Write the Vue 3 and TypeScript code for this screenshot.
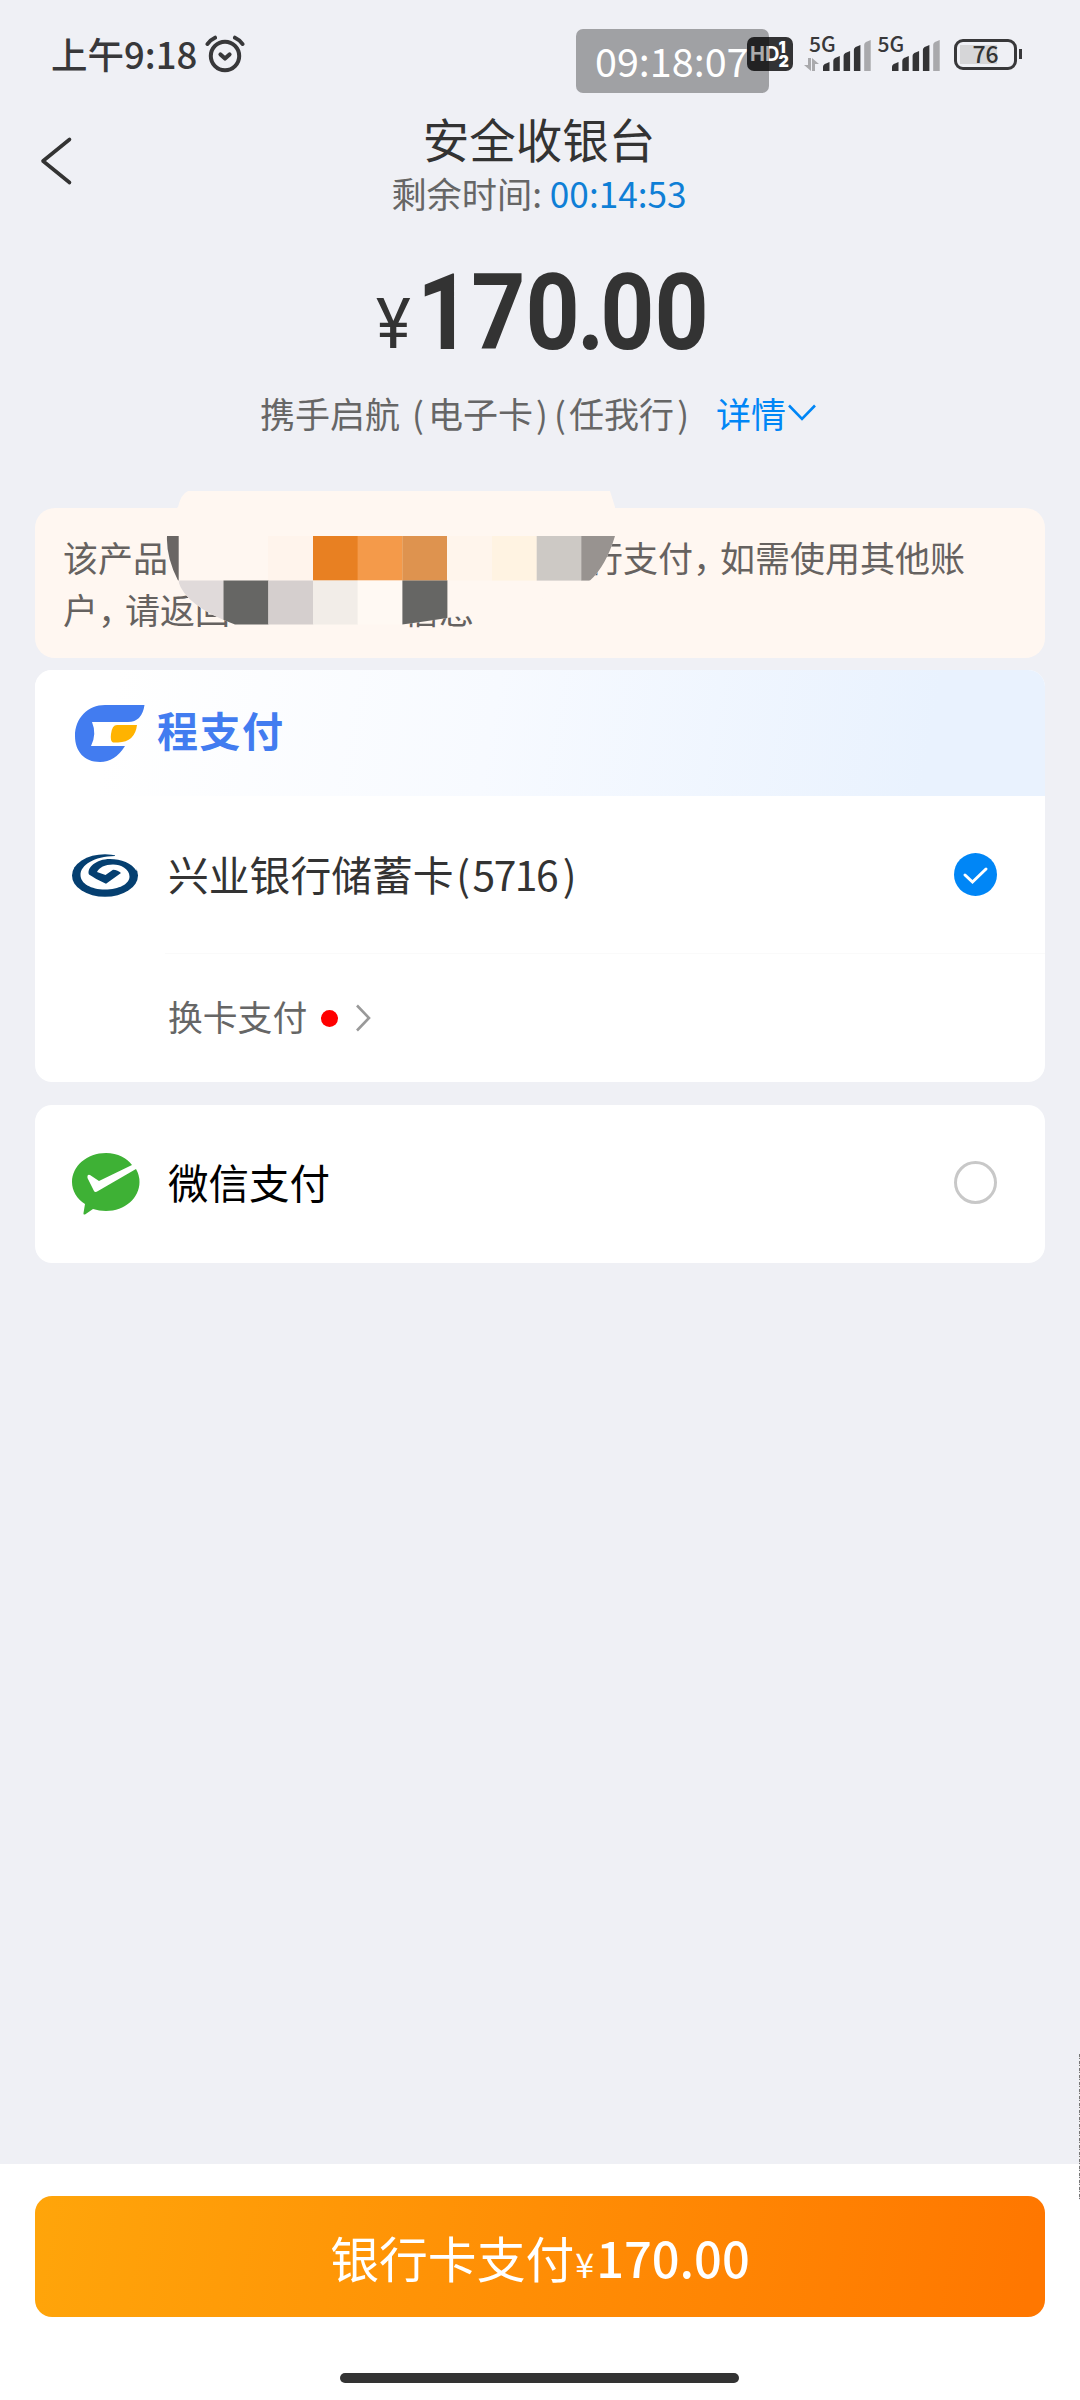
<script setup lang="ts">
interface Tile {
  x: number
  y: number
  fill: string
}

const clock = '09:18:07'
const hiddenTiles: Tile[] = [
  { x: 233, y: 45, fill: '#fff4ec' },
  { x: 278, y: 45, fill: '#e88022' },
  { x: 322.6, y: 45, fill: '#f49a4a' },
  { x: 367.4, y: 45, fill: '#de934f' },
  { x: 412, y: 45, fill: '#fff5ec' },
  { x: 457, y: 45, fill: '#fff3e2' },
  { x: 501.7, y: 45, fill: '#cdc9c5' },
  { x: 546.3, y: 45, fill: '#989390' },
  { x: 143.7, y: 89.5, fill: '#e0dada' },
  { x: 188.5, y: 89.5, fill: '#666664' },
  { x: 233.3, y: 89.5, fill: '#d5cfce' },
  { x: 278, y: 89.5, fill: '#f2ede8' },
  { x: 322.6, y: 89.5, fill: '#fff9f3' },
  { x: 367.4, y: 89.5, fill: '#666664' },
]
const barTops = [22, 16, 11, 5, 0]
</script>

<template>
  <div class="screen">
    <header class="status">
      <div class="status-left">
        <span class="time">上午9:18</span>
        <svg class="alarm" width="40" height="38" viewBox="0 0 40 38" fill="none" stroke="#38383a" stroke-linecap="round">
          <circle cx="20" cy="21" r="14.2" stroke-width="4" />
          <path d="M2.5 9 Q5 5 10 2.7M37.5 9 Q35 5 30 2.7" stroke-width="4" />
          <path d="M15.5 19.5 L20 23.5 L24.5 19.5" stroke-width="4.2" stroke-linejoin="round" />
        </svg>
      </div>
      <div class="status-right">
        <div class="hd">
          <span>HD</span>
          <span class="sims"><b>1</b><b>2</b></span>
        </div>
        <div v-for="n in 2" :key="n" class="signal">
          <span class="net">5G</span>
          <svg width="70" height="34" viewBox="0 0 70 34">
            <g v-if="n === 1" fill="#a9a9ac">
              <path d="M5 20h3v13L1 27h4zM12 33h-3V20l7 6h-4z" />
            </g>
            <path
              v-for="(t, i) in barTops"
              :key="i"
              :d="`M${20 + i * 10.3} 33 V${t + 7} Q${20 + i * 10.3} ${t + 4.5} ${23 + i * 10.3} ${t + 3.5} L${26.5 + i * 10.3} ${t + 2} V33 Z`"
              :fill="i === 4 ? '#a9a9ac' : '#333335'"
            />
          </svg>
        </div>
        <div class="battery"><span>76</span></div>
        <i class="nub"></i>
      </div>
      <div class="clock">{{ clock }}</div>
    </header>

    <nav class="nav">
      <svg class="back" width="34" height="50" viewBox="0 0 34 50" fill="none" stroke="#333" stroke-width="3.6" stroke-linecap="round" stroke-linejoin="round">
        <path d="M30.500 3.5 L4 25 L30.500 46.5" />
      </svg>
      <div class="titles">
        <h1>安全收银台</h1>
        <p>剩余时间: <span>00:14:53</span></p>
      </div>
    </nav>

    <section class="amount">
      <span class="yen">¥</span>
      <span class="num">170<i>.</i>00</span>
    </section>

    <section class="order">
      <span>携手启航</span><span class="paren first">(</span><span>电子卡</span><span class="paren">)</span><span class="paren">(</span><span>任我行</span><span class="paren">)</span>
      <a>详情</a>
      <svg width="28" height="18" viewBox="0 0 28 18" fill="none" stroke="#0086f6" stroke-width="2.6"><path d="M1 1.5 L14 15 L27 1.5" /></svg>
    </section>

    <section class="notice">
      <p>该产品<span class="gap"></span>行支付<span class="comma">，</span>如需使用其他账</p>
      <p>户<span class="comma">，</span>请返回<span class="gap short"></span>信息</p>
      <svg class="mosaic" width="1010" height="167" viewBox="0 0 1010 167">
        <defs>
          <clipPath id="smear">
            <path d="M143 16 Q146 3 153 0 H575 L580 16 V45 Q571 75 555 89.5 Q500 116 412 127 Q385 131 367 133.5 H200 Q150 115 143 89.5 Q131 66 132 45 V25 Z" />
          </clipPath>
        </defs>
        <g clip-path="url(#smear)">
          <rect x="120" y="0" width="480" height="140" fill="#fff7f1" />
          <rect x="131" y="45" width="12.7" height="44.5" fill="#6a6664" />
          <rect v-for="(t, i) in hiddenTiles" :key="i" :x="t.x" :y="t.y" width="45" height="44.6" :fill="t.fill" />
        </g>
      </svg>
    </section>

    <section class="card">
      <div class="brand">
        <svg width="70" height="57" viewBox="0 0 70 57">
          <path d="M30 0 H69.5 Q67 17 53 17 H17 Q22 29 16 41 H50 Q40 57 25 57 C9 57 0 46 0 31 C0 13 13 0 30 0Z" fill="#427cf0" />
          <path d="M42 20 H62 Q60 37 43 37.5 H38 Q35 36 36 29 Q37 20 42 20Z" fill="#ffb300" />
        </svg>
        <strong>程支付</strong>
      </div>
      <div class="method">
        <svg class="logo" width="67" height="44" viewBox="0 0 67 44">
          <ellipse cx="33" cy="21.5" rx="33" ry="21.3" fill="#053f70" />
          <path
            d="M43 2 C22 2.500 8.500 11 8.500 21 C8.500 29.500 19 35.500 33 35.500 C47 35.500 57.500 30 57.500 22.500 C57.500 15 49 10.500 41 10.500 C33 10.500 27 13.500 25 18 L33.500 21 L41 15.800 Q46 16 49 19 L34 29.800 Q24 25.500 17 20.500 C14.500 14 24 5 38 5 C49 5 60 9 64.500 17 L67 0 H43 Z"
            fill="#fff"
          />
        </svg>
        <span class="name">兴业银行储蓄卡<span class="open">(</span><span class="digits">5716</span><span class="close">)</span></span>
        <svg class="check" width="43" height="43" viewBox="0 0 43 43">
          <circle cx="21.5" cy="21.5" r="21.5" fill="#0086f6" />
          <path d="M11 22 L18.5 29 L32 16" fill="none" stroke="#fff" stroke-width="3" stroke-linecap="round" />
        </svg>
      </div>
      <div class="switch">
        <span>换卡支付</span>
        <i class="dot"></i>
        <svg width="15" height="28" viewBox="0 0 15 28" fill="none" stroke="#999" stroke-width="2.6"><path d="M1 1.5 L13 14 L1 26.5" /></svg>
      </div>
    </section>

    <section class="card wechat">
      <svg class="logo" width="68" height="62" viewBox="0 0 68 62">
        <path d="M34 0 C46 0 55 5 60 12 L27 28 L18 22 Q15 21 15.5 25 L22 38 Q23 40 26 38 L64 16 Q67.5 22 67.5 29 C67.5 45 53 58 34 58 Q27 58 21 56 L13 61.5 Q11 62 11.5 60 L13 51 C5 46 0 38 0 29 C0 13 15 0 34 0Z" fill="#3eb135" />
      </svg>
      <span class="name">微信支付</span>
      <i class="radio"></i>
    </section>

    <footer class="footer">
      <button type="button">银行卡支付<small>¥</small><span>170.00</span></button>
      <div class="home"></div>
    </footer>
    <i class="edge"></i>
  </div>
</template>

<style>
body {
  margin: 0;
}
</style>

<style scoped>
.screen {
  position: relative;
  display: flex;
  flex-direction: column;
  width: 1080px;
  height: 2400px;
  overflow: hidden;
  background: #eff0f5;
  color: #333;
  font-family: "Noto Sans CJK SC", sans-serif;
}
.screen * {
  box-sizing: border-box;
}
.status {
  position: relative;
  display: flex;
  justify-content: space-between;
  height: 108px;
  padding: 35px 58px 0 51px;
}
.status-left {
  display: flex;
  height: 40px;
  color: #38383a;
}
.time {
  width: 154px;
  font-size: 36.5px;
  font-weight: 500;
  line-height: 37px;
  white-space: nowrap;
}
.status-right {
  display: flex;
  align-items: flex-start;
}
.hd {
  display: flex;
  width: 46px;
  height: 34px;
  margin: 2px 10px 0 0;
  padding-left: 3px;
  border-radius: 7px;
  background: #333335;
  color: #fff;
  font: 700 20px/34px "Inter", sans-serif;
}
.sims {
  display: flex;
  flex-direction: column;
  margin-left: -1px;
  padding-top: 3px;
  font-size: 16px;
  line-height: 14px;
}
.signal {
  position: relative;
  width: 68.5px;
  height: 36px;
}
.net {
  position: absolute;
  top: -2px;
  left: 6px;
  font-size: 21px;
  font-weight: 500;
  line-height: 20px;
  color: #38383a;
}
.signal svg {
  display: block;
  margin-top: 3px;
}
.battery {
  width: 63px;
  height: 31px;
  margin: 4px 2px 0 14px;
  border: 3.5px solid #38383a;
  border-radius: 9px;
  background: linear-gradient(#d6d6d8, #d6d6d8) 3px 3px / 37px 19px no-repeat;
  font-size: 23px;
  font-weight: 500;
  line-height: 22px;
  text-align: center;
}
.nub {
  width: 3px;
  height: 10px;
  margin-top: 14px;
  background: #38383a;
}
.clock {
  position: absolute;
  top: 29px;
  left: 576px;
  width: 193px;
  height: 64px;
  padding-left: 19px;
  border-radius: 7px;
  background: rgba(0, 0, 0, 0.33);
  color: #fff;
  font-size: 39.5px;
  line-height: 61px;
}
.nav {
  display: flex;
  height: 112px;
}
.back {
  width: 34px;
  margin: 28px 0 0 39px;
}
.titles {
  width: 934px;
  margin-top: -2px;
  text-align: center;
}
h1 {
  margin: 0 2px 0 0;
  font-size: 46.5px;
  font-weight: 400;
  line-height: 64px;
}
p {
  margin: 0;
}
.titles p {
  margin-right: 2px;
  color: #666;
  font-size: 35.2px;
  line-height: 46px;
}
.titles p span {
  color: #0f7fd6;
}
.amount {
  display: flex;
  height: 162px;
  padding: 56px 0 0 376px;
  font-family: Roboto, sans-serif;
  font-weight: 700;
}
.yen {
  width: 41px;
  padding-top: 23px;
  font-size: 71px;
  font-weight: 400;
  line-height: 50px;
  transform: scaleX(0.93);
  transform-origin: left;
}
.num {
  font-size: 105px;
  line-height: 75px;
  transform: scaleX(0.9);
  transform-origin: left;
  white-space: nowrap;
}
.num i {
  display: inline-block;
  width: 23px;
  font-style: normal;
  text-indent: -3px;
}
.order {
  display: flex;
  align-items: center;
  height: 126px;
  padding: 0 0 64px 260px;
  color: #666;
  font-size: 35px;
  line-height: 62px;
}
.paren {
  width: 18px;
  text-align: center;
}
.paren.first {
  width: 28px;
  padding-left: 8px;
}
.order a {
  margin: 0 2px 0 24px;
  color: #0086f6;
}
.notice {
  position: relative;
  height: 150px;
  margin: 0 35px;
  padding: 23px 0 0 28px;
  border-radius: 20px;
  background: #fff7f1;
  color: #666260;
  font-size: 35px;
  line-height: 52px;
  white-space: nowrap;
}
.gap {
  display: inline-block;
  width: 420px;
}
.gap.short {
  width: 174px;
}
.comma {
  margin-right: -8px;
}
.mosaic {
  position: absolute;
  top: -17px;
  left: 0;
}
.card {
  margin: 12px 35px 0;
  overflow: hidden;
  border-radius: 17px;
  background: #fff;
}
.brand {
  display: flex;
  height: 126px;
  padding: 35px 0 0 40px;
  background: linear-gradient(100deg, #fff 8%, #f7faff 45%, #e9f2fe 88%);
}
.brand strong {
  margin: -4px 0 0 12px;
  color: #427cf0;
  font-size: 41px;
  font-weight: 700;
  line-height: 56px;
  letter-spacing: 1.5px;
}
.method {
  display: flex;
  height: 157px;
  padding: 0 48px 0 37px;
}
.method .logo {
  margin-top: 58px;
}
.name {
  flex: 1;
  padding-left: 29px;
  font-size: 40.8px;
  line-height: 60px;
}
.method .name {
  margin-top: 48px;
}
.open,
.close {
  display: inline-block;
  width: 17px;
  text-align: center;
}
.open {
  width: 19px;
}
.close {
  width: 25px;
}
.digits {
  letter-spacing: -1.5px;
}
.check {
  margin-top: 57px;
}
.switch {
  display: flex;
  align-items: center;
  height: 129px;
  margin-left: 130px;
  border-top: 1px solid #fafafa;
  padding: 0 0 1px 3px;
  color: #666;
  font-size: 35px;
}
.switch span {
  width: 139px;
  margin-top: -3px;
  font-size: 34.8px;
  white-space: nowrap;
}
.dot {
  width: 17px;
  height: 17px;
  margin: 2px 18px 0 14px;
  border-radius: 50%;
  background: #f00;
}
.wechat {
  display: flex;
  height: 158px;
  margin-top: 23px;
  padding: 0 48px 0 37px;
}
.wechat .logo {
  margin-top: 48px;
}
.wechat .name {
  padding-left: 28px;
  margin-top: 47px;
  color: #000;
  font-size: 40.5px;
}
.radio {
  width: 43px;
  height: 43px;
  margin-top: 56px;
  border: 3px solid #c8c8c8;
  border-radius: 50%;
}
.footer {
  display: flex;
  flex-direction: column;
  align-items: center;
  height: 236px;
  margin-top: auto;
  padding-top: 32px;
  background: #fff;
}
button {
  width: 1010px;
  height: 121px;
  border: 0;
  border-radius: 17px;
  background: linear-gradient(100deg, #ffa50a, #ff7700 98%);
  color: #fff;
  font-family: inherit;
  font-size: 48.8px;
  line-height: 121px;
  padding: 0;
}
button small {
  margin: 0 2px 0 1px;
  font-size: 34px;
}
button span {
  font-weight: 500;
}
.home {
  width: 399px;
  height: 10px;
  margin: 56px 1px 0 0;
  border-radius: 5px;
  background: #333;
}
.edge {
  position: absolute;
  top: 2054px;
  right: 0;
  width: 1px;
  height: 146px;
  background: repeating-linear-gradient(#777 0 3px, #ddd 3px 4px, #777 4px 5px, #eee 5px 7px);
}
</style>
